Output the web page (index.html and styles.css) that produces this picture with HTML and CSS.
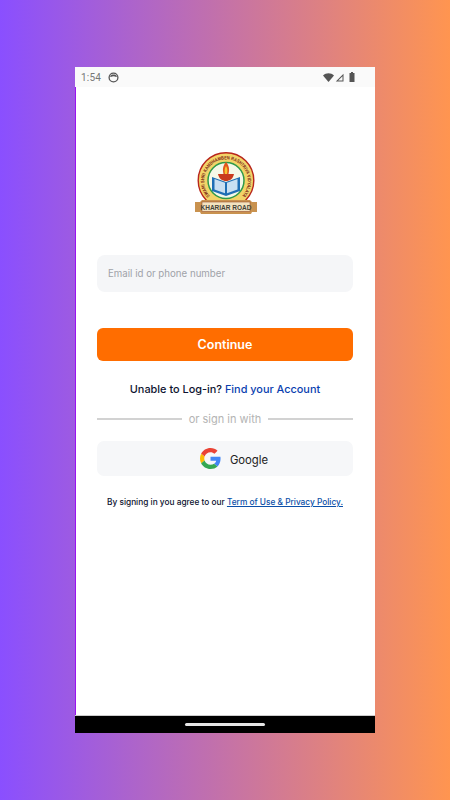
FILE: index.html
```html
<!DOCTYPE html>
<html lang="en">
<head>
<meta charset="utf-8">
<title>Sign in</title>
<link rel="stylesheet" href="styles.css">
</head>
<body>
<div class="phone">
  <div class="status">
    <span class="time">1:54</span>
    <svg class="face" width="11" height="11" viewBox="0 0 11 11"><circle cx="5.5" cy="5.5" r="4.4" fill="none" stroke="#555" stroke-width="1.3"/><path d="M2 4.2C3 2 8 2 9 4.2L8.2 5C6.5 4 4.5 4 2.8 5Z" fill="#555"/></svg>
    <span class="status-gap"></span>
    <svg class="wifi" width="11" height="9" viewBox="0 0 11 9"><path d="M0 2.4C3-.6 8-.6 11 2.4L5.5 9Z" fill="#555"/></svg>
    <svg class="signal" width="9" height="9" viewBox="0 0 9 9"><path d="M8.5 .8V8.5H.8ZM7.5 3.2 3.2 7.5H7.5Z" fill="#555" fill-rule="evenodd"/></svg>
    <svg class="battery" width="6" height="10" viewBox="0 0 6 10"><path d="M2 0H4V1H5.5V10H.5V1H2Z" fill="#555"/></svg>
  </div>
  <main class="content">
    <svg class="logo" width="62" height="62" viewBox="0 0 62 62">
      <defs><path id="ring" d="M15 44A21.800 21.800 0 1 1 47 44"/></defs>
      <circle cx="31" cy="28.500" r="27.800" fill="#f2d468" stroke="#b8261c" stroke-width="1.400"/>
      <text class="ring-text"><textPath href="#ring" textLength="100" lengthAdjust="spacingAndGlyphs">SWAMI SHRI KAMDHAMBEN RASHTRIYA VIDYALAYA</textPath></text>
      <circle cx="31" cy="28.500" r="18" fill="#f4f8e8" stroke="#2f9a4a" stroke-width="1.500"/>
      <path d="M17 25l14 5 14-5v14l-14 5-14-5z" fill="#1f6fb5"/>
      <path d="M19.500 27l10.500 3.700v10.500l-10.500-3.700zM42.500 27l-10.500 3.700v10.500l10.500-3.700z" fill="#c9e0f2"/>
      <path d="M31 10c3.500 4 3.500 8 2.500 12h-5c-1-4-1-8 2.500-12z" fill="#e2571c"/>
      <path d="M31 14c1.800 3 1.500 5 1 8h-2c-.5-3-.8-5 1-8z" fill="#f7c531"/>
      <path d="M23 22h16c-1 5-4.500 7-8 7s-7-2-8-7z" fill="#c93a1d"/>
      <path d="M0 50h5l2-2h48l2 2h5v10h-5l-1 2H6l-1-2H0z" fill="#c9924f"/>
      <rect x="7" y="50" width="48" height="9.500" fill="#f3e3c0" stroke="#8c3f22" stroke-width=".5"/>
      <text class="band-text" x="31" y="57.500" text-anchor="middle">KHARIAR ROAD</text>
    </svg>
    <div class="field">Email id or phone number</div>
    <button class="primary">Continue</button>
    <p class="help">Unable to Log-in? <a class="link">Find your Account</a></p>
    <div class="divider"><span class="rule"></span><span class="divider-text">or sign in with</span><span class="rule"></span></div>
    <button class="google">
      <svg width="21" height="21" viewBox="0 0 48 48"><path fill="#EA4335" d="M24 9.500c3.540 0 6.710 1.220 9.210 3.600l6.850-6.850C35.900 2.380 30.470 0 24 0 14.620 0 6.510 5.380 2.560 13.220l7.980 6.190C12.430 13.720 17.740 9.500 24 9.500z"/><path fill="#4285F4" d="M46.980 24.550c0-1.570-.15-3.090-.38-4.550H24v9.020h12.940c-.58 2.960-2.260 5.480-4.780 7.180l7.730 6c4.510-4.180 7.090-10.360 7.090-17.650z"/><path fill="#FBBC05" d="M10.530 28.590c-.48-1.450-.76-2.990-.76-4.590s.27-3.140.76-4.590l-7.980-6.190C.92 16.460 0 20.120 0 24c0 3.880.92 7.540 2.560 10.780l7.970-6.190z"/><path fill="#34A853" d="M24 48c6.480 0 11.930-2.130 15.890-5.810l-7.730-6c-2.150 1.450-4.920 2.300-8.160 2.300-6.260 0-11.570-4.220-13.470-9.910l-7.980 6.190C6.510 42.620 14.620 48 24 48z"/></svg>
      <span class="google-label">Google</span>
    </button>
    <p class="terms">By signing in you agree to our <a class="terms-link">Term of Use &amp; Privacy Policy.</a></p>
  </main>
  <div class="navbar"><span class="pill"></span></div>
</div>
</body>
</html>
```
FILE: styles.css
```css
* { box-sizing: border-box; }
html, body { margin: 0; height: 100%; }
body {
  width: 450px;
  height: 800px;
  overflow: hidden;
  padding-top: 67px;
  display: flex;
  justify-content: center;
  align-items: flex-start;
  background: linear-gradient(90deg, #8a4fff 0%, #ff9550 100%);
  font-family: Inter, Roboto, "Liberation Sans", sans-serif;
}
.phone {
  width: 300px;
  height: 666px;
  display: flex;
  flex-direction: column;
  background: #fff;
}
.status {
  height: 20px;
  flex: none;
  display: flex;
  align-items: center;
  padding: 0 20px 0 6px;
  background: #fafafa;
  color: #777;
}
.time { font: 10px Roboto, sans-serif; letter-spacing: .2px; }
.face { margin-left: 7px; }
.status-gap { flex: 1; }
.wifi { margin-right: 1px; }
.signal { margin-right: 5px; }
.content {
  flex: 1;
  display: flex;
  flex-direction: column;
  align-items: stretch;
  padding: 65px 22px 0;
  box-shadow: inset 1px 0 0 #9a12f0;
}
.logo { align-self: center; flex: none; margin-left: 1px; }
.ring-text { font: 700 4.800px "Liberation Sans", sans-serif; fill: #7a2416; }
.band-text { font: 700 6.500px "Liberation Sans", sans-serif; fill: #44443a; }
.field {
  margin-top: 41px;
  height: 37px;
  border-radius: 8px;
  background: #f5f6f8;
  color: #a0a2a8;
  font-size: 9.700px;
  line-height: 37px;
  padding-left: 11px;
}
.primary {
  margin-top: 36px;
  height: 33px;
  border: 0;
  border-radius: 6px;
  background: #ff6d00;
  color: #fff;
  font: 600 12.500px Inter, sans-serif;
}
.help {
  margin: 21px 0 0;
  text-align: center;
  font-size: 10.900px;
  line-height: 15px;
  font-weight: 450;
  color: #0d1330;
}
.link { color: #0b3fb0; }
.divider {
  margin-top: 14px;
  display: flex;
  align-items: center;
  gap: 7px;
  height: 15px;
}
.rule { flex: 1; height: 2px; background: #d2d2d2; }
.divider-text { font-size: 11px; color: #b4b4b4; }
.google {
  margin-top: 15px;
  height: 35px;
  border: 0;
  border-radius: 7px;
  background: #f6f7f9;
  display: flex;
  align-items: center;
  justify-content: center;
  gap: 9px;
  padding-left: 24px;
  color: #222;
  font: 11.300px Inter, sans-serif;
}
.google-label { padding-top: 2px; }
.terms {
  margin: 20px 0 0;
  text-align: center;
  font-size: 8.300px;
  font-weight: 500;
  line-height: 13px;
  color: #0d1330;
}
.terms-link { color: #0b4fa8; text-decoration: underline; }
.navbar {
  height: 18px;
  flex: none;
  background: #000;
  display: flex;
  align-items: center;
  justify-content: center;
  border-top: 1px solid #ccc;
}
.pill { width: 80px; height: 2.500px; background: #e6e6e6; border-radius: 2px; }
```
